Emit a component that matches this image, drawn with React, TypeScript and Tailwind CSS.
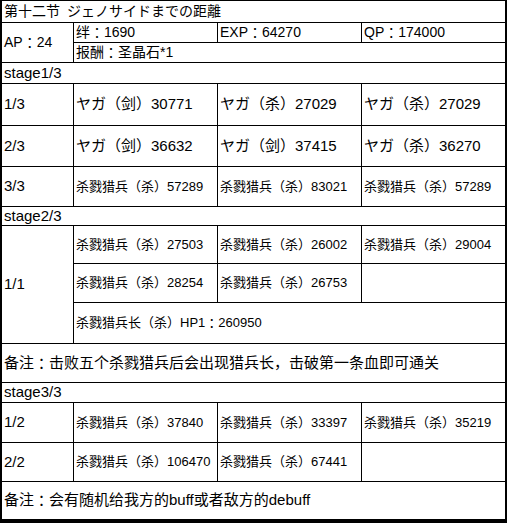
import React from "react";

type CellProps = {
  children?: React.ReactNode;
  className?: string;
};

function Cell({ children, className = "" }: CellProps) {
  return <div className={`flex items-center bg-white pl-0.5 whitespace-nowrap ${className}`}>{children}</div>;
}

// full-width colon sits centred in the reference, as in the JP face
function Colon() {
  return <span className="font-['Noto_Sans_CJK_JP',sans-serif]">：</span>;
}

// ヤガ rows use 15px, the 杀戮猎兵 rows use 13px
const big = "text-[15px]";
const small = "text-[13px]";

export default function App() {
  return (
    <div className="w-[507px] h-[523px] bg-black border-t border-l-2 border-r-2 border-b-4 border-black font-['Liberation_Sans','Noto_Sans_CJK_SC',sans-serif] text-black">
      <div className="grid grid-cols-[71px_143px_143px_143px] grid-rows-[21px_19px_19px_20px_41px_40px_39px_18px_37px_38px_40px_38px_19px_39px_38px_37px] gap-px bg-black">
        {/* header */}
        <Cell className="col-span-4 text-[14px]">第十二节{"\u2002"}ジェノサイドまでの距離</Cell>
        <Cell className="row-span-2 text-[14px]">AP<Colon />24</Cell>
        <Cell className="text-[14px]">绊<Colon />1690</Cell>
        <Cell className="text-[14px]">EXP<Colon />64270</Cell>
        <Cell className="text-[14px]">QP<Colon />174000</Cell>
        <Cell className="col-span-3 text-[14px]">报酬<Colon />圣晶石*1</Cell>

        {/* stage 1 */}
        <Cell className="col-span-4 text-[15px]">stage1/3</Cell>
        <Cell className={big}>1/3</Cell>
        <Cell className={big}>ヤガ（剑）30771</Cell>
        <Cell className={big}>ヤガ（杀）27029</Cell>
        <Cell className={big}>ヤガ（杀）27029</Cell>
        <Cell className={big}>2/3</Cell>
        <Cell className={big}>ヤガ（剑）36632</Cell>
        <Cell className={big}>ヤガ（剑）37415</Cell>
        <Cell className={big}>ヤガ（杀）36270</Cell>
        <Cell className={big}>3/3</Cell>
        <Cell className={small}>杀戮猎兵（杀）57289</Cell>
        <Cell className={small}>杀戮猎兵（杀）83021</Cell>
        <Cell className={small}>杀戮猎兵（杀）57289</Cell>

        {/* stage 2 */}
        <Cell className="col-span-4 text-[15px]">stage2/3</Cell>
        <Cell className={`row-span-3 ${big}`}>1/1</Cell>
        <Cell className={small}>杀戮猎兵（杀）27503</Cell>
        <Cell className={small}>杀戮猎兵（杀）26002</Cell>
        <Cell className={small}>杀戮猎兵（杀）29004</Cell>
        <Cell className={small}>杀戮猎兵（杀）28254</Cell>
        <Cell className={small}>杀戮猎兵（杀）26753</Cell>
        <Cell />
        <Cell className={`col-span-3 ${small}`}>杀戮猎兵长（杀）HP1<Colon />260950</Cell>
        <Cell className="col-span-4 text-[15px]">备注<Colon />击败五个杀戮猎兵后会出现猎兵长，击破第一条血即可通关</Cell>

        {/* stage 3 */}
        <Cell className="col-span-4 text-[15px]">stage3/3</Cell>
        <Cell className={big}>1/2</Cell>
        <Cell className={small}>杀戮猎兵（杀）37840</Cell>
        <Cell className={small}>杀戮猎兵（杀）33397</Cell>
        <Cell className={small}>杀戮猎兵（杀）35219</Cell>
        <Cell className={big}>2/2</Cell>
        <Cell className={small}>杀戮猎兵（杀）106470</Cell>
        <Cell className={small}>杀戮猎兵（杀）67441</Cell>
        <Cell />
        <Cell className="col-span-4 text-[15px]">备注<Colon />会有随机给我方的buff或者敌方的debuff</Cell>
      </div>
    </div>
  );
}
